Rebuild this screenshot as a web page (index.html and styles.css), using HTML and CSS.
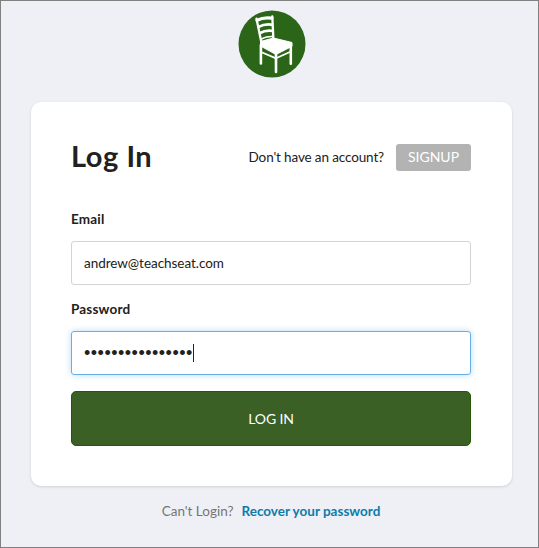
FILE: index.html
```html
<!DOCTYPE html>
<html lang="en">
<head>
<meta charset="utf-8">
<title>Log In</title>
<link rel="stylesheet" href="styles.css">
</head>
<body>
<main class="page">
  <svg class="logo" viewBox="0 0 68 68" aria-hidden="true">
    <circle cx="34" cy="34" r="33.5" fill="#2b6518"/>
    <g fill="none" stroke="#fff" stroke-linecap="round" stroke-linejoin="round">
      <path d="M18.500 8.700L23.300 32M34.300 6.500L35.400 29" stroke-width="2.300"/>
      <path d="M19 10.200Q26 6.800 34 8.200" stroke-width="3.200"/>
      <path d="M20.300 17Q27 13.500 34.500 14.800M21.500 23.200Q28 19.800 35 21" stroke-width="2.700" stroke-linecap="butt"/>
      <path d="M22.700 29.500Q28 26 35 26.500" stroke-width="1.400"/>
      <path d="M22.900 35V53.500M38 43V62M52.800 34V53.800" stroke-width="2.600"/>
      <path d="M23 42L38 48.300L53 41.500" stroke-width="1.800"/>
    </g>
    <path d="M22.500 31.500L35.500 28L54 32.500V36.300L38 44.500L22.500 36Z" fill="#fff" stroke="#fff" stroke-width="1" stroke-linejoin="round"/>
  </svg>
  <form class="card">
    <header class="heading">
      <h1>Log In</h1>
      <div class="account"><span class="question">Don't have an account?</span><a class="signup"><span>SIGNUP</span></a></div>
    </header>
    <div class="label email-label"><span>Email</span></div>
    <div class="field"><span class="email">andrew@teachseat.com</span></div>
    <div class="label password-label"><span>Password</span></div>
    <div class="field focused"><span class="dots">••••••••••••••••</span><i class="caret"></i></div>
    <div class="submit"><span>LOG IN</span></div>
  </form>
  <footer class="recover"><span class="cant">Can't Login?</span><a>Recover your password</a></footer>
</main>
</body>
</html>
```
FILE: styles.css
```css
* { box-sizing: border-box; }
body { margin: 0; font: 14px/20px Lato, "Open Sans", sans-serif; color: #212121; }
.page { width: 539px; height: 548px; border: 1px solid #808080; background: #eff0f5; padding: 9px 27px 0 30px; overflow: hidden; white-space: nowrap; }
.logo { display: block; width: 68px; height: 68px; margin: 0 0 0 207px; }
.card { width: 481px; height: 384px; margin-top: 24px; padding: 40px 40px 0; background: #fff; border-radius: 10px; box-shadow: 0 1px 3px rgba(0,0,0,.13); }
.heading { display: flex; justify-content: space-between; width: 400px; height: 30px; }
h1 { margin: 0; font-size: 29px; line-height: 28px; font-weight: 700; letter-spacing: .55px; }
.account { display: flex; align-items: center; gap: 12px; }
.question { font-size: 13.5px; letter-spacing: -.13px; }
.signup { width: 75px; height: 27px; border-radius: 3px; background: #b3b3b3; color: #fff; text-align: center; line-height: 26px; }
.label { position: relative; top: -1px; font-weight: 700; line-height: 20px; font-size: 13.5px; letter-spacing: .18px; }
.email-label { margin-top: 38px; }
.password-label { margin-top: 15px; }
.field { width: 400px; height: 44px; margin-top: 11px; padding-left: 12px; display: flex; align-items: center; border: 1px solid #d4d4d4; border-radius: 3px; }
.email { font-size: 13.5px; letter-spacing: -.04px; }
.focused { border-color: #66afe9; box-shadow: 0 0 6px rgba(102,175,233,.45); }
.dots { font: 18px/20px "Liberation Sans", sans-serif; letter-spacing: .5px; }
.caret { width: 1px; height: 18px; background: #222; }
.submit { display: flex; align-items: center; justify-content: center; width: 400px; height: 55px; margin-top: 16px; border: 1px solid #245807; border-radius: 5px; background: #3b6025; color: #fff; letter-spacing: -.15px; }
.recover { display: flex; justify-content: center; gap: 8px; margin-top: 15px; color: #757575; font-size: 13.5px; }
.recover a { color: #0c7cab; font-weight: 700; }
```
